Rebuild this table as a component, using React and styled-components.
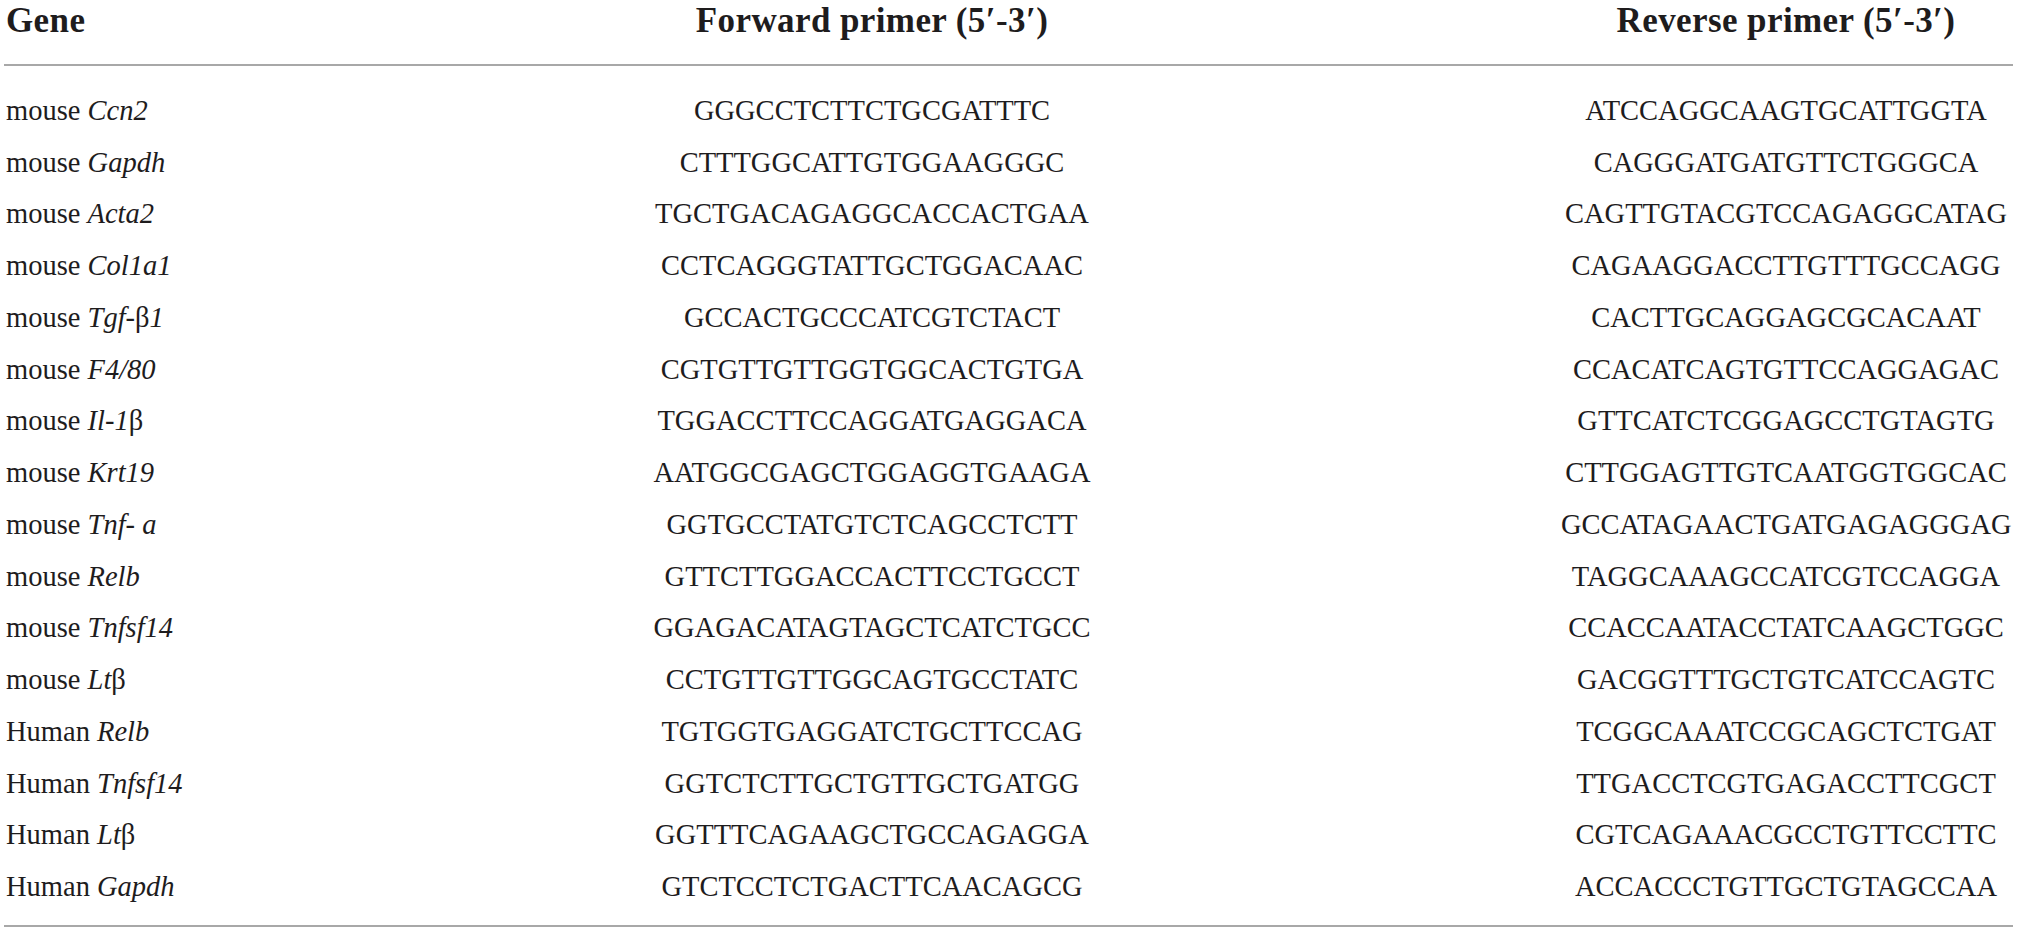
import styled, { createGlobalStyle } from 'styled-components';

const GlobalStyle = createGlobalStyle`
  html, body {
    margin: 0;
    padding: 0;
    background: #ffffff;
  }
  body {
    font-family: 'Liberation Serif', 'Times New Roman', serif;
    color: #1e1c1d;
  }
`;

const Table = styled.div`
  width: 2009px;
  margin-left: 4px;
  font-size: 28.5px;
`;

const Grid = styled.div`
  display: grid;
  grid-template-columns: 177px 1378px 1fr;
  align-items: center;
  padding: 0 2px;
`;

const HeadRow = styled(Grid)`
  height: 40px;
  padding-top: 1px;
  padding-bottom: 23px;
  border-bottom: 2px solid #a8a8a8;
`;

const HeadCell = styled.div`
  font-size: 35px;
  line-height: 40px;
  font-weight: 700;
  letter-spacing: 0.4px;
  text-align: ${(p) => (p.$center ? 'center' : 'left')};
  white-space: nowrap;
`;

const Body = styled.div`
  padding-top: 19px;
  padding-bottom: 12px;
  border-bottom: 2px solid #a8a8a8;
`;

const Row = styled(Grid)`
  height: 51.75px;
`;

const Cell = styled.div`
  text-align: ${(p) => (p.$center ? 'center' : 'left')};
  white-space: nowrap;
`;

const Gene = styled.i`
  font-style: italic;
`;

const Greek = styled.span`
  font-style: normal;
`;

const rows = [
  ['mouse', [['Ccn2']], 'GGGCCTCTTCTGCGATTTC', 'ATCCAGGCAAGTGCATTGGTA'],
  ['mouse', [['Gapdh']], 'CTTTGGCATTGTGGAAGGGC', 'CAGGGATGATGTTCTGGGCA'],
  ['mouse', [['Acta2']], 'TGCTGACAGAGGCACCACTGAA', 'CAGTTGTACGTCCAGAGGCATAG'],
  ['mouse', [['Col1a1']], 'CCTCAGGGTATTGCTGGACAAC', 'CAGAAGGACCTTGTTTGCCAGG'],
  ['mouse', [['Tgf-'], ['β', true], ['1']], 'GCCACTGCCCATCGTCTACT', 'CACTTGCAGGAGCGCACAAT'],
  ['mouse', [['F4/80']], 'CGTGTTGTTGGTGGCACTGTGA', 'CCACATCAGTGTTCCAGGAGAC'],
  ['mouse', [['Il-1'], ['β', true]], 'TGGACCTTCCAGGATGAGGACA', 'GTTCATCTCGGAGCCTGTAGTG'],
  ['mouse', [['Krt19']], 'AATGGCGAGCTGGAGGTGAAGA', 'CTTGGAGTTGTCAATGGTGGCAC'],
  ['mouse', [['Tnf- a']], 'GGTGCCTATGTCTCAGCCTCTT', 'GCCATAGAACTGATGAGAGGGAG'],
  ['mouse', [['Relb']], 'GTTCTTGGACCACTTCCTGCCT', 'TAGGCAAAGCCATCGTCCAGGA'],
  ['mouse', [['Tnfsf14']], 'GGAGACATAGTAGCTCATCTGCC', 'CCACCAATACCTATCAAGCTGGC'],
  ['mouse', [['Lt'], ['β', true]], 'CCTGTTGTTGGCAGTGCCTATC', 'GACGGTTTGCTGTCATCCAGTC'],
  ['Human', [['Relb']], 'TGTGGTGAGGATCTGCTTCCAG', 'TCGGCAAATCCGCAGCTCTGAT'],
  ['Human', [['Tnfsf14']], 'GGTCTCTTGCTGTTGCTGATGG', 'TTGACCTCGTGAGACCTTCGCT'],
  ['Human', [['Lt'], ['β', true]], 'GGTTTCAGAAGCTGCCAGAGGA', 'CGTCAGAAACGCCTGTTCCTTC'],
  ['Human', [['Gapdh']], 'GTCTCCTCTGACTTCAACAGCG', 'ACCACCCTGTTGCTGTAGCCAA'],
];

const GeneName = ({ parts }) => (
  <Gene>
    {parts.map(([text, greek], i) =>
      greek ? <Greek key={i}>{text}</Greek> : <span key={i}>{text}</span>
    )}
  </Gene>
);

const App = () => {
  return (
    <>
      <GlobalStyle />
      <Table>
        <HeadRow>
          <HeadCell>Gene</HeadCell>
          <HeadCell $center>Forward primer (5′-3′)</HeadCell>
          <HeadCell $center>Reverse primer (5′-3′)</HeadCell>
        </HeadRow>
        <Body>
          {rows.map(([species, parts, fwd, rev], i) => (
            <Row key={i}>
              <Cell>
                {species} <GeneName parts={parts} />
              </Cell>
              <Cell $center>{fwd}</Cell>
              <Cell $center>{rev}</Cell>
            </Row>
          ))}
        </Body>
      </Table>
    </>
  );
};

export default App;
